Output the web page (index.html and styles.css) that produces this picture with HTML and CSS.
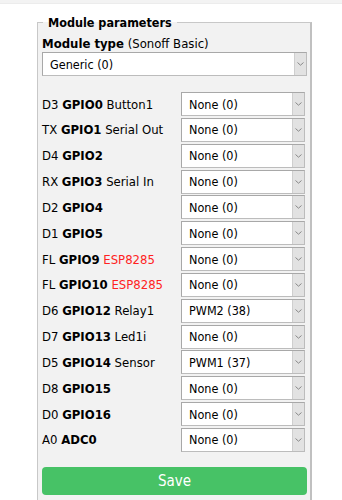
FILE: index.html
```html
<!DOCTYPE html>
<html>
  <head>
    <meta charset="UTF-8" />
    <meta name="viewport" content="width=device-width, initial-scale=1.0" />
    <title>Configure Module</title>
    <link rel="stylesheet" href="styles.css">
  </head>
  <body>
    <div class="topbar"></div>
    <fieldset class="params">
      <legend>Module parameters</legend>
      <p class="type"><b>Module type</b> (Sonoff Basic)</p>
      <div class="sel wide">
        <select><option>Generic (0)</option></select>
        <span class="arrow"><svg width="7" height="4" viewBox="0 0 7 4"><path d="M0.5 0.5 L3.5 3.2 L6.5 0.5" fill="none" stroke="#888" stroke-width="1"/></svg></span>
      </div>

      <div class="rows">
        <div class="row"><span class="lbl">D3 <b>GPIO0</b> Button1</span><div class="sel"><select><option>None (0)</option></select><span class="arrow"><svg width="7" height="4" viewBox="0 0 7 4"><path d="M0.5 0.5 L3.5 3.2 L6.5 0.5" fill="none" stroke="#888" stroke-width="1"/></svg></span></div></div>
        <div class="row"><span class="lbl">TX <b>GPIO1</b> Serial Out</span><div class="sel"><select><option>None (0)</option></select><span class="arrow"><svg width="7" height="4" viewBox="0 0 7 4"><path d="M0.5 0.5 L3.5 3.2 L6.5 0.5" fill="none" stroke="#888" stroke-width="1"/></svg></span></div></div>
        <div class="row"><span class="lbl">D4 <b>GPIO2</b></span><div class="sel"><select><option>None (0)</option></select><span class="arrow"><svg width="7" height="4" viewBox="0 0 7 4"><path d="M0.5 0.5 L3.5 3.2 L6.5 0.5" fill="none" stroke="#888" stroke-width="1"/></svg></span></div></div>
        <div class="row"><span class="lbl">RX <b>GPIO3</b> Serial In</span><div class="sel"><select><option>None (0)</option></select><span class="arrow"><svg width="7" height="4" viewBox="0 0 7 4"><path d="M0.5 0.5 L3.5 3.2 L6.5 0.5" fill="none" stroke="#888" stroke-width="1"/></svg></span></div></div>
        <div class="row"><span class="lbl">D2 <b>GPIO4</b></span><div class="sel"><select><option>None (0)</option></select><span class="arrow"><svg width="7" height="4" viewBox="0 0 7 4"><path d="M0.5 0.5 L3.5 3.2 L6.5 0.5" fill="none" stroke="#888" stroke-width="1"/></svg></span></div></div>
        <div class="row"><span class="lbl">D1 <b>GPIO5</b></span><div class="sel"><select><option>None (0)</option></select><span class="arrow"><svg width="7" height="4" viewBox="0 0 7 4"><path d="M0.5 0.5 L3.5 3.2 L6.5 0.5" fill="none" stroke="#888" stroke-width="1"/></svg></span></div></div>
        <div class="row"><span class="lbl">FL <b>GPIO9</b> <span class="warn">ESP8285</span></span><div class="sel"><select><option>None (0)</option></select><span class="arrow"><svg width="7" height="4" viewBox="0 0 7 4"><path d="M0.5 0.5 L3.5 3.2 L6.5 0.5" fill="none" stroke="#888" stroke-width="1"/></svg></span></div></div>
        <div class="row"><span class="lbl">FL <b>GPIO10</b> <span class="warn">ESP8285</span></span><div class="sel"><select><option>None (0)</option></select><span class="arrow"><svg width="7" height="4" viewBox="0 0 7 4"><path d="M0.5 0.5 L3.5 3.2 L6.5 0.5" fill="none" stroke="#888" stroke-width="1"/></svg></span></div></div>
        <div class="row"><span class="lbl">D6 <b>GPIO12</b> Relay1</span><div class="sel"><select><option>PWM2 (38)</option></select><span class="arrow"><svg width="7" height="4" viewBox="0 0 7 4"><path d="M0.5 0.5 L3.5 3.2 L6.5 0.5" fill="none" stroke="#888" stroke-width="1"/></svg></span></div></div>
        <div class="row"><span class="lbl">D7 <b>GPIO13</b> Led1i</span><div class="sel"><select><option>None (0)</option></select><span class="arrow"><svg width="7" height="4" viewBox="0 0 7 4"><path d="M0.5 0.5 L3.5 3.2 L6.5 0.5" fill="none" stroke="#888" stroke-width="1"/></svg></span></div></div>
        <div class="row"><span class="lbl">D5 <b>GPIO14</b> Sensor</span><div class="sel"><select><option>PWM1 (37)</option></select><span class="arrow"><svg width="7" height="4" viewBox="0 0 7 4"><path d="M0.5 0.5 L3.5 3.2 L6.5 0.5" fill="none" stroke="#888" stroke-width="1"/></svg></span></div></div>
        <div class="row"><span class="lbl">D8 <b>GPIO15</b></span><div class="sel"><select><option>None (0)</option></select><span class="arrow"><svg width="7" height="4" viewBox="0 0 7 4"><path d="M0.5 0.5 L3.5 3.2 L6.5 0.5" fill="none" stroke="#888" stroke-width="1"/></svg></span></div></div>
        <div class="row"><span class="lbl">D0 <b>GPIO16</b></span><div class="sel"><select><option>None (0)</option></select><span class="arrow"><svg width="7" height="4" viewBox="0 0 7 4"><path d="M0.5 0.5 L3.5 3.2 L6.5 0.5" fill="none" stroke="#888" stroke-width="1"/></svg></span></div></div>
        <div class="row"><span class="lbl">A0 <b>ADC0</b></span><div class="sel"><select><option>None (0)</option></select><span class="arrow"><svg width="7" height="4" viewBox="0 0 7 4"><path d="M0.5 0.5 L3.5 3.2 L6.5 0.5" fill="none" stroke="#888" stroke-width="1"/></svg></span></div></div>
      </div>

      <button type="button" class="save">Save</button>
    </fieldset>
  </body>
</html>
```

FILE: styles.css
```css
html {
  background: white;
}
body {
  margin: 0;
  font-family: "DejaVu Sans", Verdana, sans-serif;
  font-stretch: semi-condensed;
  font-size: 13px;
  color: black;
  overflow: hidden;
}
.topbar {
  height: 3px;
  background: #f3f3f3;
  border-bottom: 1px solid #ececec;
}
.params {
  margin: 11px 30px 0 37px;
  padding: 0 3px 6px 4px;
  background: #f2f2f2;
  border: 1px solid #c8c8c8;
  border-right: 2px solid #c0c0c0;
  min-width: 0;
}
legend {
  font-size: 12.5px;
  font-weight: bold;
  padding: 0 5px;
  margin-left: 1px;
}
.type {
  margin: 7px 0 1px 0;
  line-height: 14px;
}
.sel {
  position: relative;
  height: 24px;
}
.sel select {
  appearance: none;
  -webkit-appearance: none;
  width: 100%;
  height: 24px;
  box-sizing: border-box;
  margin: 0;
  padding: 0 0 0 7px;
  background: white;
  border: 1px solid #bcbcbc;
  border-top-color: #a8a8a8;
  border-left-color: #a8a8a8;
  border-radius: 0;
  font-family: "DejaVu Sans", Verdana, sans-serif;
  font-stretch: semi-condensed;
  font-size: 12.5px;
  color: black;
}
.sel .arrow {
  position: absolute;
  top: 1px;
  right: 1px;
  bottom: 1px;
  width: 11px;
  background: #e2e2e2;
  border-left: 1px solid #cfcfcf;
  display: flex;
  align-items: center;
  justify-content: center;
}
.rows {
  margin-top: 16px;
  display: flex;
  flex-direction: column;
  gap: 1.85px;
}
.row {
  display: grid;
  grid-template-columns: 139px 124px;
  align-items: center;
}
.warn {
  color: #f22;
}
.save {
  display: block;
  width: 100%;
  height: 28px;
  margin-top: 15px;
  border: none;
  border-radius: 4px;
  background: #47c266;
  color: white;
  font-family: "DejaVu Sans", Verdana, sans-serif;
  font-stretch: semi-condensed;
  font-size: 15px;
  line-height: 28px;
  padding: 0;
}
```
